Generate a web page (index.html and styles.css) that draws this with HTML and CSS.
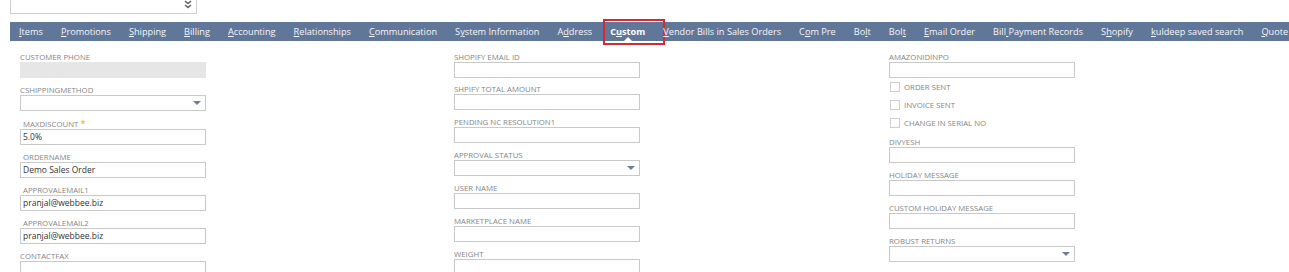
FILE: index.html
```html
<!DOCTYPE html>
<html>
<head>
<meta charset="utf-8">
<link rel="stylesheet" href="styles.css">
</head>
<body>
<div class="topselect">
  <svg class="chev" width="8" height="9" viewBox="0 0 8 9"><path d="M1 1.2 L4 3.6 L7 1.2 M1 5 L4 7.4 L7 5" fill="none" stroke="#6a6a6a" stroke-width="1.6"/></svg>
</div>
<nav class="tabs">
  <span class="tab"><u>I</u>tems</span>
  <span class="tab"><u>P</u>romotions</span>
  <span class="tab"><u>S</u>hipping</span>
  <span class="tab"><u>B</u>illing</span>
  <span class="tab"><u>A</u>ccounting</span>
  <span class="tab"><u>R</u>elationships</span>
  <span class="tab"><u>C</u>ommunication</span>
  <span class="tab">S<u>y</u>stem Information</span>
  <span class="tab">A<u>d</u>dress</span>
  <span class="tab active">C<u>u</u>stom<span class="notch"></span><span class="hilite"></span></span>
  <span class="tab"><u>V</u>endor Bills in Sales Orders</span>
  <span class="tab">C<u>o</u>m Pre</span>
  <span class="tab">Bo<u>l</u>t</span>
  <span class="tab">Bol<u>t</u></span>
  <span class="tab"><u>E</u>mail Order</span>
  <span class="tab">Bill<u> </u>Payment Records</span>
  <span class="tab">S<u>h</u>opify</span>
  <span class="tab"><u>k</u>uldeep saved search</span>
  <span class="tab"><u>Q</u>uote</span>
</nav>
<main class="form">
  <section class="col">
    <div class="field">
      <div class="label">CUSTOMER PHONE</div>
      <div class="input disabled"></div>
    </div>
    <div class="field">
      <div class="label">CSHIPPINGMETHOD</div>
      <div class="input select"><span class="arrow"></span></div>
    </div>
    <div class="field req">
      <div class="label">MAXDISCOUNT <span class="star">*</span></div>
      <div class="input">5.0%</div>
    </div>
    <div class="field">
      <div class="label ind">ORDERNAME</div>
      <div class="input">Demo Sales Order</div>
    </div>
    <div class="field">
      <div class="label ind">APPROVALEMAIL1</div>
      <div class="input">pranjal@webbee.biz</div>
    </div>
    <div class="field">
      <div class="label ind">APPROVALEMAIL2</div>
      <div class="input">pranjal@webbee.biz</div>
    </div>
    <div class="field">
      <div class="label">CONTACTFAX</div>
      <div class="input"></div>
    </div>
  </section>
  <section class="col mid">
    <div class="field first">
      <div class="label">SHOPIFY EMAIL ID</div>
      <div class="input"></div>
    </div>
    <div class="field">
      <div class="label">SHPIFY TOTAL AMOUNT</div>
      <div class="input"></div>
    </div>
    <div class="field">
      <div class="label">PENDING NC RESOLUTION1</div>
      <div class="input"></div>
    </div>
    <div class="field">
      <div class="label">APPROVAL STATUS</div>
      <div class="input select"><span class="arrow"></span></div>
    </div>
    <div class="field">
      <div class="label">USER NAME</div>
      <div class="input"></div>
    </div>
    <div class="field">
      <div class="label">MARKETPLACE NAME</div>
      <div class="input"></div>
    </div>
    <div class="field">
      <div class="label">WEIGHT</div>
      <div class="input"></div>
    </div>
  </section>
  <section class="col right">
    <div class="field">
      <div class="label">AMAZONIDINPO</div>
      <div class="input"></div>
    </div>
    <div class="checks">
      <div class="check"><span class="box"></span>ORDER SENT</div>
      <div class="check"><span class="box"></span>INVOICE SENT</div>
      <div class="check"><span class="box"></span>CHANGE IN SERIAL NO</div>
    </div>
    <div class="field">
      <div class="label">DIVYESH</div>
      <div class="input"></div>
    </div>
    <div class="field">
      <div class="label">HOLIDAY MESSAGE</div>
      <div class="input"></div>
    </div>
    <div class="field">
      <div class="label">CUSTOM HOLIDAY MESSAGE</div>
      <div class="input"></div>
    </div>
    <div class="field">
      <div class="label">ROBUST RETURNS</div>
      <div class="input select"><span class="arrow"></span></div>
    </div>
  </section>
</main>
</body>
</html>
```

FILE: styles.css
```css
html, body {
  margin: 0;
  padding: 0;
  background: #fff;
  overflow: hidden;
}
body {
  font-family: "Open Sans", "Liberation Sans", sans-serif;
  width: 1289px;
  height: 272px;
}
.topselect {
  position: relative;
  margin-left: 10px;
  width: 185px;
  height: 13px;
  border: 1px solid #cfcfcf;
  border-top: none;
}
.chev {
  position: absolute;
  right: 4px;
  top: 0px;
}
.tabs {
  margin-top: 8px;
  margin-left: 10px;
  height: 19px;
  background: #607799;
  display: flex;
  align-items: center;
  white-space: nowrap;
}
.tab {
  position: relative;
  flex-shrink: 0;
  padding: 0 9px;
  font-size: 9.2px;
  line-height: 19px;
  color: #f4f6f9;
}
.tab u {
  text-decoration-thickness: 1px;
  text-underline-offset: 1px;
}
.tab.active {
  font-weight: 700;
  color: #fff;
}
.notch {
  position: absolute;
  left: 50%;
  bottom: 0;
  margin-left: -4px;
  width: 0;
  height: 0;
  border-left: 4px solid transparent;
  border-right: 4px solid transparent;
  border-bottom: 4px solid #fff;
}
.hilite {
  position: absolute;
  left: 2px;
  right: -11px;
  top: -3px;
  bottom: -4px;
  border: 2px solid #d42a32;
}
.form {
  display: grid;
  grid-template-columns: 434px 435px 1fr;
  padding-left: 20px;
  padding-top: 11px;
}
.col {
  display: flex;
  flex-direction: column;
}
.field {
  margin-bottom: 7px;
}
.mid .field.first {
  margin-bottom: 6px;
}
.field.req {
  margin-top: 1px;
}
.label {
  font-size: 7.8px;
  line-height: 10px;
  height: 10px;
  color: #858585;
  white-space: nowrap;
}
.label.ind, .req .label {
  padding-left: 3px;
}
.star {
  color: #e3a21a;
  font-size: 9px;
}
.input {
  position: relative;
  box-sizing: border-box;
  width: 186px;
  height: 16px;
  border: 1px solid #c9c9c9;
  font-size: 8.5px;
  line-height: 14px;
  padding-left: 2px;
  color: #333;
}
.input.disabled {
  background: #e6e6e6;
  border-color: #e6e6e6;
}
.arrow {
  position: absolute;
  right: 4px;
  top: 5px;
  width: 0;
  height: 0;
  border-left: 4px solid transparent;
  border-right: 4px solid transparent;
  border-top: 4px solid #6f7f8f;
}
.checks {
  margin-top: -7px;
  margin-bottom: 5px;
}
.check {
  display: flex;
  align-items: center;
  height: 18px;
  font-size: 7.8px;
  color: #858585;
  padding-left: 1px;
}
.box {
  box-sizing: border-box;
  width: 10px;
  height: 10px;
  border: 1px solid #cfcfcf;
  margin-right: 4px;
}
```
